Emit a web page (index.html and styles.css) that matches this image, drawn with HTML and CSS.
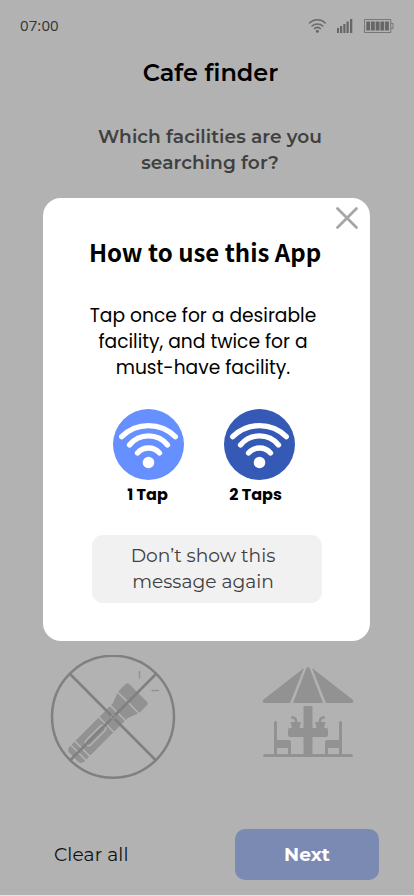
FILE: index.html
```html
<!DOCTYPE html>
<html lang="en">
<head>
<meta charset="utf-8">
<meta name="viewport" content="width=device-width, initial-scale=1">
<title>Cafe finder</title>
<link rel="stylesheet" href="styles.css">
</head>
<body>
<div class="screen">
  <header class="status">
    <span class="time">07:00</span>
    <svg class="status-icons" width="86" height="16" viewBox="0 0 86 16">
      <g fill="none" stroke="#6b6b6b" stroke-width="1.500" stroke-linecap="round">
        <path d="M1.500 5A11.500 11.500 0 0 1 17.300 5M4 8A8 8 0 0 1 14.800 8M6.500 10.600A4.500 4.500 0 0 1 12.300 10.600"/>
      </g>
      <circle cx="9.400" cy="13.200" r="1.500" fill="#666"/>
      <path fill="#666" d="M29 10h2v5h-2zM32 8h2.200v7H32zM35.300 6h2.200v9h-2.200zM38.500 3.500h2.200v11.500h-2.200zM42 1h2.300v14H42z"/>
      <path d="M56.500 1.500h26.300v13H56.500z" fill="none" stroke="#777"/>
      <path d="M83 5.500h2v5h-2" fill="none" stroke="#777"/>
      <path fill="#666" d="M58.300 3.500h3.800v9h-3.800zM63 3.500h3.800v9H63zM67.700 3.500h3.800v9h-3.800zM72.400 3.500h3.800v9h-3.800zM77.100 3.500h3.800v9h-3.800z"/>
    </svg>
  </header>
  <h1>Cafe finder</h1>
  <h2><span>Which facilities are you</span><span>searching for?</span></h2>

  <div class="facilities">
    <svg width="126" height="126" viewBox="0 0 126 126">
      <g transform="translate(64 62) rotate(-45)" fill="#929292">
        <path d="M-51.200-10.500H-52Q-57-10-57-6V6Q-57 10-52 10.500H-51.200zM-49.600-10.500h4v21h-4zM-44-10.500H-11.500V10.500H-44zM-10-10.500H4.800V10.500H-10zM6.400-10.500H9L19.400-14.500V14.500L9 10.500H6.400zM21-15H31.500Q34-15 34-12.500V12.500Q34 15 31.500 15H21z"/>
        <rect x="-39" y="-3.200" width="25.500" height="6.400" rx="3" fill="none" stroke="#b2b2b2" stroke-width="1.500"/>
      </g>
      <path d="M89.500 16.500v6.500M102 35.500h6.500" stroke="#929292" stroke-width="1.400" stroke-linecap="round"/>
      <g fill="none" stroke="#808080" stroke-width="2.500">
        <circle cx="63" cy="61.700" r="61"/>
        <path d="M20.500 19.500L105.500 105M105.500 19.500L20.500 105"/>
      </g>
      <circle cx="63" cy="62" r="2" fill="none" stroke="#999"/>
    </svg>
    <svg class="terrace" width="92" height="92" viewBox="0 0 92 92">
      <g fill="#929292">
        <path d="M42 1L1 33Q0 36 3 36H28zM46 0Q45 0 44 2L31 36H61L48 2Q47 0 46 0zM50 1L64 36H89Q92 36 91 33z"/>
        <path d="M41.500 39H50.500V61H64Q66 61 66 63V68Q66 70 64 70H50.500V87H89.500Q91 87 91 88.500T89.500 90H2.500Q1 90 1 88.500T2.500 87H12V56Q12 54 13.500 54T15 56V73H27Q29 73 29 75V87H41.500V70H28Q26 70 26 68V63Q26 61 28 61H41.500z"/>
        <path d="M28.500 55H39L37.500 61H30zM53 55H63.500L62 61H54.500z"/>
        <path d="M63 87V75Q63 73 65 73H77V56Q77 54 78.500 54T80 56V87z"/>
      </g>
      <path d="M30 50.500Q34 50.500 34 54V56M62 50.500Q58 50.500 58 54V56" fill="none" stroke="#929292" stroke-width="2.500" stroke-linecap="round"/>
      <path fill="#b2b2b2" d="M15 81H26V87H15zM66 81H77V87H66z"/>
    </svg>
  </div>

  <footer><span class="clear">Clear all</span><span class="next">Next</span></footer>

  <section class="dialog">
    <svg class="close" width="24" height="24" viewBox="0 0 24 24"><path d="M2.500 2.500L21.500 21.500M21.500 2.500L2.500 21.500" stroke="#a6a6a6" stroke-width="2.800" stroke-linecap="round"/></svg>
    <h3>How to use this App</h3>
    <p class="help"><span>Tap once for a desirable</span><span>facility, and twice for a</span><span>must-have facility.</span></p>
    <div class="taps">
      <figure>
        <svg width="71" height="71" viewBox="0 0 71 71"><circle cx="35.500" cy="35.500" r="35.500" fill="#6690ff"/><g fill="none" stroke="#fff" stroke-width="5.300" stroke-linecap="round"><path d="M8.700 27.700A38 38 0 0 1 62.300 27.700M16.500 36A24.500 24.500 0 0 1 54.500 36M24.500 44A14.600 14.600 0 0 1 46.500 44"/></g><circle cx="35.500" cy="53.500" r="5.800" fill="#fff"/></svg>
        <figcaption class="c1">1 Tap</figcaption>
      </figure>
      <figure>
        <svg width="71" height="71" viewBox="0 0 71 71"><circle cx="35.500" cy="35.500" r="35.500" fill="#355ab6"/><g fill="none" stroke="#fff" stroke-width="5.300" stroke-linecap="round"><path d="M8.700 27.700A38 38 0 0 1 62.300 27.700M16.500 36A24.500 24.500 0 0 1 54.500 36M24.500 44A14.600 14.600 0 0 1 46.500 44"/></g><circle cx="35.500" cy="53.500" r="5.800" fill="#fff"/></svg>
        <figcaption class="c2">2 Taps</figcaption>
      </figure>
    </div>
    <div class="dismiss"><span>Don’t show this</span><span>message again</span></div>
  </section>
</div>
</body>
</html>
```
FILE: styles.css
```css
* { box-sizing: border-box; }
body { margin: 0; background: #e4e4e4; font-family: Montserrat, Inter, sans-serif; }
h1, h2, h3, p, figure { margin: 0; }
.screen { position: relative; width: 414px; height: 895px; background: #b2b2b2; overflow: hidden; display: flex; flex-direction: column; }
.status { height: 52px; padding: 0 20px; display: flex; justify-content: space-between; align-items: center; }
.time { font: 400 15px/20px "Open Sans", sans-serif; color: #333; letter-spacing: .1px; margin-top: -2px; }
.status-icons { display: block; }
h1 { font-size: 24px; line-height: 30px; font-weight: 600; text-align: center; padding: 6px 0 0 7px; color: #000; }
h2 { display: flex; flex-direction: column; align-items: center; padding: 36px 0 0 6px; font-size: 18.6px; line-height: 26px; font-weight: 600; color: #404040; letter-spacing: .05px; }
.facilities { flex: 1; display: flex; justify-content: space-between; align-items: flex-end; padding: 0 60px 30px 50px; }
.terrace { margin-bottom: 22px; }
footer { height: 84px; padding: 18px 35px 15px 54px; display: flex; justify-content: space-between; align-items: center; font-size: 18.67px; }
.clear { color: #111; letter-spacing: .1px; }
.next { width: 144px; height: 51px; border-radius: 10px; background: #7b8ab2; color: #fff; font-weight: 700; text-align: center; line-height: 51px; }
.dialog { position: absolute; left: 43px; top: 198px; width: 327px; height: 443px; border-radius: 18px; background: #fff; display: flex; flex-direction: column; align-items: center; }
.close { position: absolute; top: 8px; right: 11px; }
h3 { padding-top: 38px; margin-right: 3px; font: 700 24px/32px "Noto Sans CJK SC", "Noto Sans", sans-serif; color: #000; }
.help { margin-top: 35px; margin-right: 7px; display: flex; flex-direction: column; align-items: center; font: 400 18.67px/26px Poppins, Inter, sans-serif; color: #000; }
.taps { display: flex; gap: 40px; margin: 28px 5px 0 0; }
figure { width: 71px; display: flex; flex-direction: column; align-items: center; }
figure svg { display: block; }
figcaption { font: 700 16px/24px Poppins, Inter, sans-serif; color: #000; margin-top: 3px; white-space: nowrap; }
.c1 { margin-right: 2px; }
.c2 { margin-right: 8px; }
.dismiss { width: 230px; height: 68px; margin: 28px 0 0 1px; padding: 8px 8px 0 0; border-radius: 11px; background: #f1f1f1; color: #404040; display: flex; flex-direction: column; align-items: center; font-size: 18.67px; line-height: 26px; }
```
